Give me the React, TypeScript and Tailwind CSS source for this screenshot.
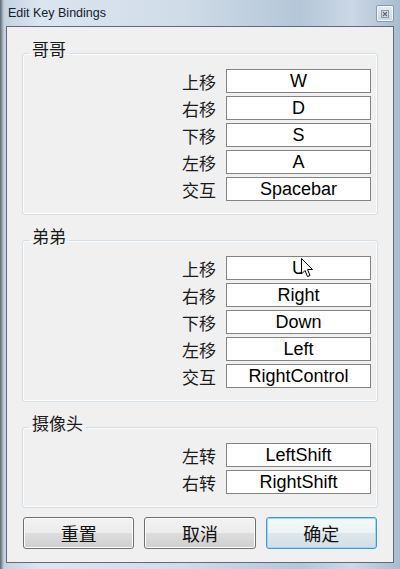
import React from "react";

type Binding = { label: string; key: string };

const groups: { title: string; rows: Binding[]; pb: string }[] = [
  {
    title: "哥哥",
    pb: "pb-[13px]",
    rows: [
      { label: "上移", key: "W" },
      { label: "右移", key: "D" },
      { label: "下移", key: "S" },
      { label: "左移", key: "A" },
      { label: "交互", key: "Spacebar" },
    ],
  },
  {
    title: "弟弟",
    pb: "pb-[13px]",
    rows: [
      { label: "上移", key: "U" },
      { label: "右移", key: "Right" },
      { label: "下移", key: "Down" },
      { label: "左移", key: "Left" },
      { label: "交互", key: "RightControl" },
    ],
  },
  {
    title: "摄像头",
    pb: "pb-[13px]",
    rows: [
      { label: "左转", key: "LeftShift" },
      { label: "右转", key: "RightShift" },
    ],
  },
];

const cjk = "font-['Noto_Sans_CJK_SC',sans-serif]";

function Cursor() {
  // mouse pointer caught in the screenshot
  return (
    <svg
      className="absolute left-[74px] top-[1px]"
      width="13"
      height="20"
      viewBox="0 0 13 20"
    >
      <path
        d="M0.5 0.5 L0.5 16 L4 12.5 L6.5 18.5 L9 17.5 L6.5 11.5 L11.5 11.5 Z"
        fill="#fff"
        stroke="#000"
        strokeWidth="1"
        strokeLinejoin="round"
      />
    </svg>
  );
}

function KeyRow({ row, cursor }: { row: Binding; cursor?: boolean }) {
  return (
    <div className="flex items-center justify-end gap-[10px]">
      <span className={`${cjk} text-[17px] leading-none text-[#1a1a1a]`}>{row.label}</span>
      <div className="relative flex h-[24px] w-[145px] items-center justify-center border border-[#838383] bg-white font-['Liberation_Sans',sans-serif] text-[18px] leading-none text-black">
        {row.key}
        {cursor && <Cursor />}
      </div>
    </div>
  );
}

function Button({ label, primary }: { label: string; primary?: boolean }) {
  return (
    <button
      className={`flex h-[32px] flex-1 items-center justify-center rounded-[3px] border ${cjk} text-[18px] text-[#111] ${
        primary
          ? "border-[#3c9ad8] bg-[linear-gradient(#f4f9fc_0%,#edf2f5_50%,#dde6eb_51%,#d4dee4_100%)] shadow-[inset_0_0_0_1px_#9fd8f7]"
          : "border-[#707070] bg-[linear-gradient(#f3f3f3_0%,#ebebeb_50%,#dddddd_51%,#cfcfcf_100%)] shadow-[inset_0_0_0_1px_#fcfcfc]"
      }`}
    >
      {label}
    </button>
  );
}

export default function App() {
  return (
    <div className="flex h-[569px] w-[400px] flex-col bg-[linear-gradient(90deg,#5d6670_0px,#c4d2e0_4px,#dbe5f0_40px,#d0dce8_45%,#b4c6d8_75%,#cbd8e5_88%,#a9bccf_100%)]">
      {/* Title bar */}
      <div className="flex h-[26px] items-center justify-between pl-[8px] pr-[6px]">
        <span className="font-['Liberation_Sans',sans-serif] text-[12.5px] text-[#14202e]">Edit Key Bindings</span>
        <div className="mt-[1px] flex h-[17px] w-[18px] items-center justify-center rounded-[2px] border border-[#8a9aab] bg-[linear-gradient(#e6edf4,#c9d6e3)] shadow-[inset_0_0_0_1px_#f2f6fa]">
          <svg width="8" height="8" viewBox="0 0 8 8">
            <rect x="0.5" y="0.5" width="7" height="7" fill="none" stroke="#8d99a6" />
            <path d="M2 2 L6 6 M6 2 L2 6" stroke="#5b6775" strokeWidth="1.2" />
          </svg>
        </div>
      </div>

      {/* Client area */}
      <div className="mx-[6px] flex flex-1 flex-col gap-[9px] border border-[#5f6b78] bg-[#f0f0f0] px-[15px] pt-[10px]">
        {groups.map((g, gi) => (
          <fieldset
            key={g.title}
            className={`rounded-[3px] border border-[#d5dfe5] pl-[6px] pr-[6px] shadow-[inset_0_0_0_1px_#fafcfd] ${g.pb}`}
          >
            <legend className={`${cjk} px-[3px] pb-[8px] text-[17px] leading-[24px] text-[#1a1a1a]`}>{g.title}</legend>
            <div className="flex flex-col gap-[3px]">
              {g.rows.map((r, ri) => (
                <KeyRow key={r.label} row={r} cursor={gi === 1 && ri === 0} />
              ))}
            </div>
          </fieldset>
        ))}

        <div className="flex gap-[10px] px-[1px]">
          <Button label="重置" />
          <Button label="取消" />
          <Button label="确定" primary />
        </div>
      </div>
      <div className="h-[6px]" />
    </div>
  );
}
